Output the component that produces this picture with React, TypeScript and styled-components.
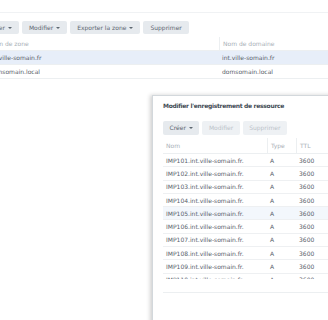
import styled, { createGlobalStyle } from "styled-components";

const GlobalStyle = createGlobalStyle`
  html, body {
    margin: 0;
    padding: 0;
    background: #fff;
  }
  body {
    font-family: "DejaVu Sans", Verdana, sans-serif;
    overflow: hidden;
  }
`;

const zones = [
  { zone: "int.ville-somain.fr", domain: "int.ville-somain.fr", selected: true },
  { zone: "domsomain.local", domain: "domsomain.local", selected: false },
];

const records = Array.from({ length: 10 }, (_, i) => ({
  name: `IMP${101 + i}.int.ville-somain.fr.`,
  type: "A",
  ttl: "3600",
  hover: i === 4,
}));

const App = () => {
  return (
    <Page>
      <GlobalStyle />
      <Main>
        <Toolbar $shift={-4.5}>
          <Button $pad={7}>
            Créer <Caret />
          </Button>
          <Button $pad={7}>
            Modifier <Caret />
          </Button>
          <Button $pad={7}>
            Exporter la zone <Caret />
          </Button>
          <Button $pad={7}>Supprimer</Button>
        </Toolbar>
        <ZoneGrid>
          <ZoneHeader>
            <HeadCell>Nom de zone</HeadCell>
            <HeadCell $divider>Nom de domaine</HeadCell>
          </ZoneHeader>
          {zones.map((z) => (
            <ZoneRow key={z.zone} $selected={z.selected}>
              <Cell>{z.zone}</Cell>
              <Cell>{z.domain}</Cell>
            </ZoneRow>
          ))}
        </ZoneGrid>
      </Main>

      <Window>
        <WindowTitle>Modifier l'enregistrement de ressource</WindowTitle>
        <WindowBody>
          <Toolbar>
            <Button $tall>
              Créer <Caret />
            </Button>
            <Button $tall disabled>
              Modifier
            </Button>
            <Button $tall disabled>
              Supprimer
            </Button>
          </Toolbar>
          <RecordGrid>
            <RecordHeader>
              <HeadCell>Nom</HeadCell>
              <HeadCell $divider>Type</HeadCell>
              <HeadCell $divider>TTL</HeadCell>
            </RecordHeader>
            <RecordBody>
              {records.map((r) => (
                <RecordRow key={r.name} $hover={r.hover}>
                  <Cell>{r.name}</Cell>
                  <Cell>{r.type}</Cell>
                  <Cell>{r.ttl}</Cell>
                </RecordRow>
              ))}
            </RecordBody>
            <GridFooter />
          </RecordGrid>
        </WindowBody>
      </Window>
    </Page>
  );
};

const Page = styled.div`
  position: relative;
  width: 328px;
  height: 320px;
  overflow: hidden;
  padding-top: 12px;
  box-sizing: border-box;
`;

const Main = styled.div`
  margin-left: -14px;
  border-top: 1px solid #f0f2f4;
  padding-top: 8px;
`;

const Toolbar = styled.div<{ $shift?: number }>`
  display: flex;
  gap: 3px;
  margin-left: ${(p) => p.$shift ?? 0}px;
`;

const Button = styled.button<{ $tall?: boolean; $pad?: number }>`
  display: flex;
  align-items: center;
  gap: 3px;
  height: ${(p) => (p.$tall ? "14px" : "13px")};
  padding: 0 ${(p) => p.$pad ?? 6.5}px;
  border: none;
  border-radius: 2px;
  background: #e6eaee;
  color: #5d6770;
  font-family: inherit;
  font-size: 6px;
  line-height: 1;

  &:disabled {
    background: #eef1f4;
    color: #bcc3ca;
  }
`;

const Caret = styled.span`
  width: 0;
  height: 0;
  border-left: 2px solid transparent;
  border-right: 2px solid transparent;
  border-top: 2px solid currentColor;
`;

const ZoneGrid = styled.div`
  margin-top: 3px;
`;

const ZoneHeader = styled.div`
  display: grid;
  grid-template-columns: 233px 1fr;
  height: 13px;
  border-bottom: 1px solid #eceff1;
`;

const HeadCell = styled.div<{ $divider?: boolean }>`
  display: flex;
  align-items: center;
  padding-left: 3px;
  font-size: 6px;
  color: #a9b0b7;
  border-left: ${(p) => (p.$divider ? "1px solid #eceff1" : "none")};
  white-space: nowrap;
  overflow: hidden;
`;

const ZoneRow = styled.div<{ $selected?: boolean }>`
  display: grid;
  grid-template-columns: 233px 1fr;
  height: 13px;
  border-bottom: 1px solid #eceff1;
  background: ${(p) => (p.$selected ? "#e7eef9" : "#fff")};
`;

const Cell = styled.div`
  display: flex;
  align-items: center;
  padding-left: 3px;
  font-size: 6px;
  color: #58616b;
  white-space: nowrap;
  overflow: hidden;
`;

const Window = styled.div`
  position: absolute;
  left: 152px;
  top: 95px;
  width: 220px;
  height: 260px;
  background: #fff;
  border: 1px solid #d3d8dc;
  box-shadow: -2px 0 4px rgba(0, 0, 0, 0.18);
`;

const WindowTitle = styled.div`
  height: 18px;
  display: flex;
  align-items: center;
  padding-left: 10px;
  font-size: 6px;
  font-weight: bold;
  letter-spacing: -0.3px;
  color: #434c55;
  white-space: nowrap;
`;

const WindowBody = styled.div`
  padding: 7px 0 0 10px;
`;

const RecordGrid = styled.div`
  margin-top: 3px;
`;

const RecordHeader = styled.div`
  display: grid;
  grid-template-columns: 104px 29px 1fr;
  height: 15px;
  border-bottom: 1px solid #eceff1;
`;

const RecordBody = styled.div`
  height: 125px;
  overflow: hidden;
`;

const RecordRow = styled.div<{ $hover?: boolean }>`
  display: grid;
  grid-template-columns: 104px 29px 1fr;
  height: 12.3px;
  border-bottom: 1px solid #eef0f2;
  background: ${(p) => (p.$hover ? "#f3f7fc" : "#fff")};
`;

const GridFooter = styled.div`
  height: 13px;
  border-bottom: 1px solid #eceff1;
`;

export default App;
